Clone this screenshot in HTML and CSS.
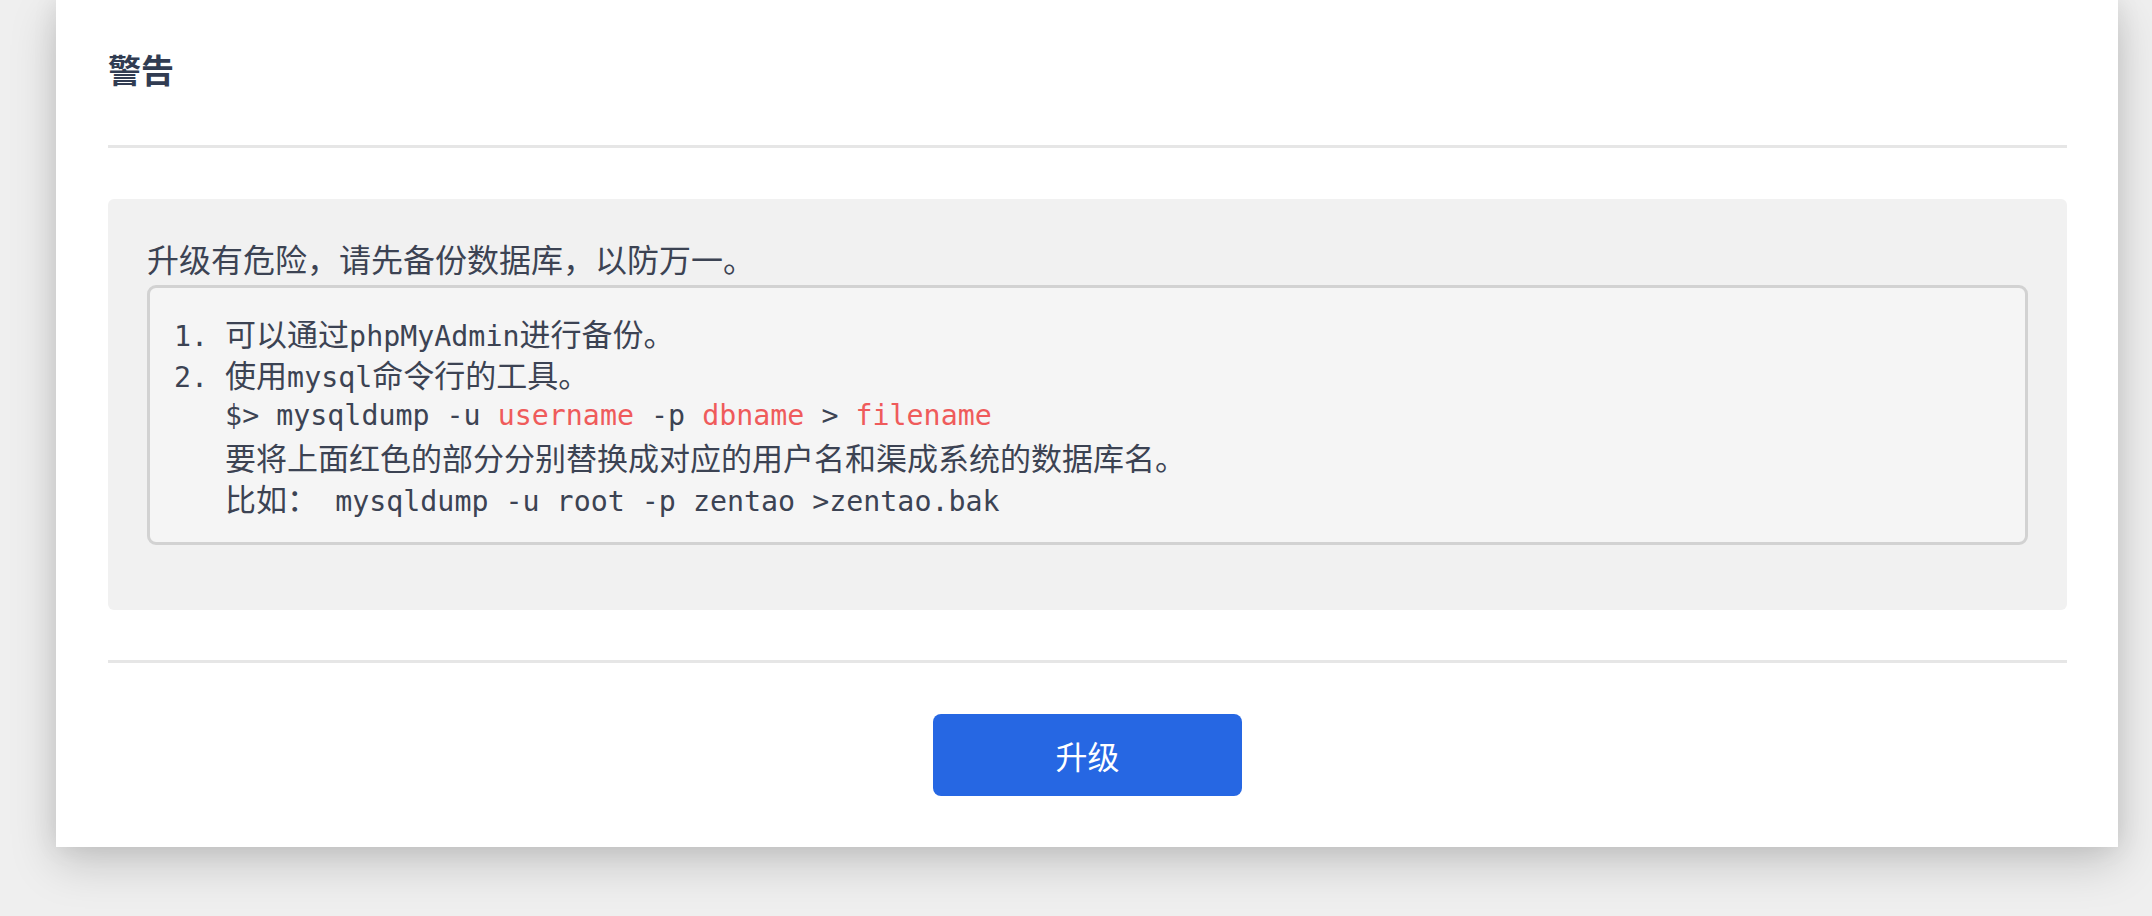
FILE: index.html
```html
<!DOCTYPE html>
<html lang="zh-CN">
<head>
<meta charset="utf-8">
<title>警告</title>
<link rel="stylesheet" href="styles.css">
</head>
<body>
<div class="page">
  <div class="card">
    <div class="card-head">
      <h2 class="title">警告</h2>
    </div>
    <div class="card-body">
      <div class="notice">
        <p class="notice-text">升级有危险，请先备份数据库，以防万一。</p>
        <div class="code">
          <div class="line">1. <span class="zh">可以通过</span>phpMyAdmin<span class="zh">进行备份。</span></div>
          <div class="line">2. <span class="zh">使用</span>mysql<span class="zh">命令行的工具。</span></div>
          <div class="line">   $&gt; mysqldump -u <span class="red">username</span> -p <span class="red">dbname</span> &gt; <span class="red">filename</span></div>
          <div class="line">   <span class="zh">要将上面红色的部分分别替换成对应的用户名和渠成系统的数据库名。</span></div>
          <div class="line">   <span class="zh">比如：</span> mysqldump -u root -p zentao &gt;zentao.bak</div>
        </div>
      </div>
    </div>
    <div class="card-foot">
      <button class="btn-primary" type="button">升级</button>
    </div>
  </div>
</div>
</body>
</html>
```

FILE: styles.css
```css
html, body {
  margin: 0;
  padding: 0;
}
body {
  background: #efefef;
  font-family: "Noto Sans CJK SC", "Noto Sans", sans-serif;
  color: #3c4353;
}
.page {
  padding: 0 34px 69px 56px;
}
.card {
  width: 2062px;
  box-sizing: border-box;
  background: #ffffff;
  padding: 0 51px 51px 52px;
  box-shadow: 0 16px 44px rgba(0, 0, 0, 0.18), 0 0 24px rgba(0, 0, 0, 0.08);
}
.card-head {
  padding: 45px 0 52px;
  border-bottom: 3px solid #e6e6e6;
}
.title {
  margin: 0;
  font-size: 33px;
  line-height: 48px;
  font-weight: 700;
  color: #313c52;
}
.card-body {
  padding: 51px 0 50px;
  border-bottom: 3px solid #e6e6e6;
}
.notice {
  background: #f1f1f1;
  border-radius: 6px;
  padding: 37px 39px 65px 39px;
}
.notice-text {
  margin: 0 0 5px;
  font-size: 32px;
  line-height: 44px;
  color: #3c4353;
}
.code {
  background: #f5f5f5;
  border: 3px solid #d2d2d2;
  border-radius: 9px;
  padding: 24px 22px 24px 24px;
  font-family: "DejaVu Sans Mono", "Liberation Mono", monospace;
  font-size: 28.3px;
  line-height: 41.25px;
  color: #3c4353;
}
.line {
  white-space: pre;
  height: 41.25px;
}
.zh {
  font-family: "Noto Sans CJK SC", sans-serif;
  font-size: 31px;
}
.red {
  color: #ef5b5b;
}
.card-foot {
  display: flex;
  justify-content: center;
  padding-top: 51px;
}
.btn-primary {
  width: 309px;
  height: 82px;
  border: none;
  border-radius: 8px;
  background: #2667e3;
  color: #ffffff;
  font-family: "Noto Sans CJK SC", sans-serif;
  font-size: 32px;
  cursor: pointer;
}
```
